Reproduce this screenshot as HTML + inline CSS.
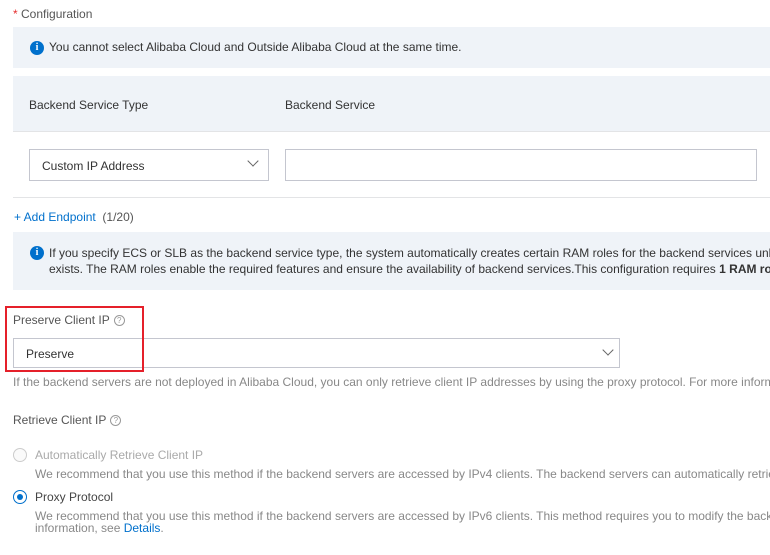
<!DOCTYPE html>
<html><head><style>
*{margin:0;padding:0;box-sizing:border-box}
body{width:770px;height:555px;overflow:hidden;background:#fff;font-family:"Liberation Sans",sans-serif;font-size:12px;color:#333;position:relative}
.a{position:absolute;white-space:nowrap;line-height:14px}
.box{position:absolute;background:#eff3f8}
.g{color:#888}
.b{color:#0070cc}
.info{position:absolute;width:14px;height:14px;border-radius:50%;background:#0070cc;color:#fff;font:bold 10px/14px "Liberation Serif",serif;text-align:center}
.q{display:inline-block;width:11px;height:11px;border:1px solid #999;border-radius:50%;font-size:8px;line-height:9px;text-align:center;color:#999;vertical-align:middle;margin-left:4px}
.sel{position:absolute;border:1px solid #c4c6cf;background:#fff}
.chev{position:absolute;width:8px;height:8px;border-right:1.3px solid #666;border-bottom:1.3px solid #666;transform:rotate(45deg)}
</style></head><body>
<div class="a" style="left:13px;top:7px;color:#555"><span style="color:#e62e2e">*</span> Configuration</div>
<div class="box" style="left:13px;top:27px;width:757px;height:41px"></div>
<div class="info" style="left:30px;top:41px">i</div>
<div class="a" style="left:49px;top:40px">You cannot select Alibaba Cloud and Outside Alibaba Cloud at the same time.</div>
<div class="box" style="left:13px;top:76px;width:757px;height:56px;border-bottom:1px solid #e3e4e6"></div>
<div class="a" style="left:29px;top:98px">Backend Service Type</div>
<div class="a" style="left:285px;top:98px">Backend Service</div>
<div class="sel" style="left:29px;top:149px;width:240px;height:32px"></div>
<div class="a" style="left:42px;top:159px">Custom IP Address</div>
<div class="chev" style="left:249px;top:157px"></div>
<div class="sel" style="left:285px;top:149px;width:472px;height:32px"></div>
<div style="position:absolute;left:13px;top:197px;width:757px;height:1px;background:#e3e4e6"></div>
<div class="a b" style="left:14px;top:210px">+ Add Endpoint <span style="color:#555">&nbsp;(1/20)</span></div>
<div class="box" style="left:13px;top:232px;width:757px;height:58px"></div>
<div class="info" style="left:30px;top:246px">i</div>
<div class="a" style="left:49px;top:246px">If you specify ECS or SLB as the backend service type, the system automatically creates certain RAM roles for the backend services unless</div>
<div class="a" style="left:49px;top:262px">exists. The RAM roles enable the required features and ensure the availability of backend services.This configuration requires <b>1 RAM role</b></div>
<div class="a" style="left:13px;top:313px;color:#555">Preserve Client IP<span class="q">?</span></div>
<div class="sel" style="left:13px;top:338px;width:607px;height:30px"></div>
<div class="a" style="left:26px;top:347px">Preserve</div>
<div class="chev" style="left:604px;top:346px"></div>
<div style="position:absolute;left:5px;top:306px;width:139px;height:66px;border:2px solid #e5202a"></div>
<div class="a g" style="left:13px;top:375px">If the backend servers are not deployed in Alibaba Cloud, you can only retrieve client IP addresses by using the proxy protocol. For more information</div>
<div class="a" style="left:13px;top:413px;color:#555">Retrieve Client IP<span class="q">?</span></div>
<div style="position:absolute;left:13px;top:448px;width:14px;height:14px;border:1px solid #ccc;border-radius:50%;background:#fafafa"></div>
<div class="a" style="left:35px;top:448px;color:#aaa">Automatically Retrieve Client IP</div>
<div class="a g" style="left:35px;top:467px">We recommend that you use this method if the backend servers are accessed by IPv4 clients. The backend servers can automatically retrieve</div>
<div style="position:absolute;left:13px;top:490px;width:14px;height:14px;border:1px solid #0070cc;border-radius:50%;background:#fff"><div style="position:absolute;left:3px;top:3px;width:6px;height:6px;border-radius:50%;background:#0070cc"></div></div>
<div class="a" style="left:35px;top:490px;color:#444">Proxy Protocol</div>
<div class="a g" style="left:35px;top:509px">We recommend that you use this method if the backend servers are accessed by IPv6 clients. This method requires you to modify the backend</div>
<div class="a g" style="left:35px;top:521px">information, see <span class="b">Details</span>.</div>
</body></html>
